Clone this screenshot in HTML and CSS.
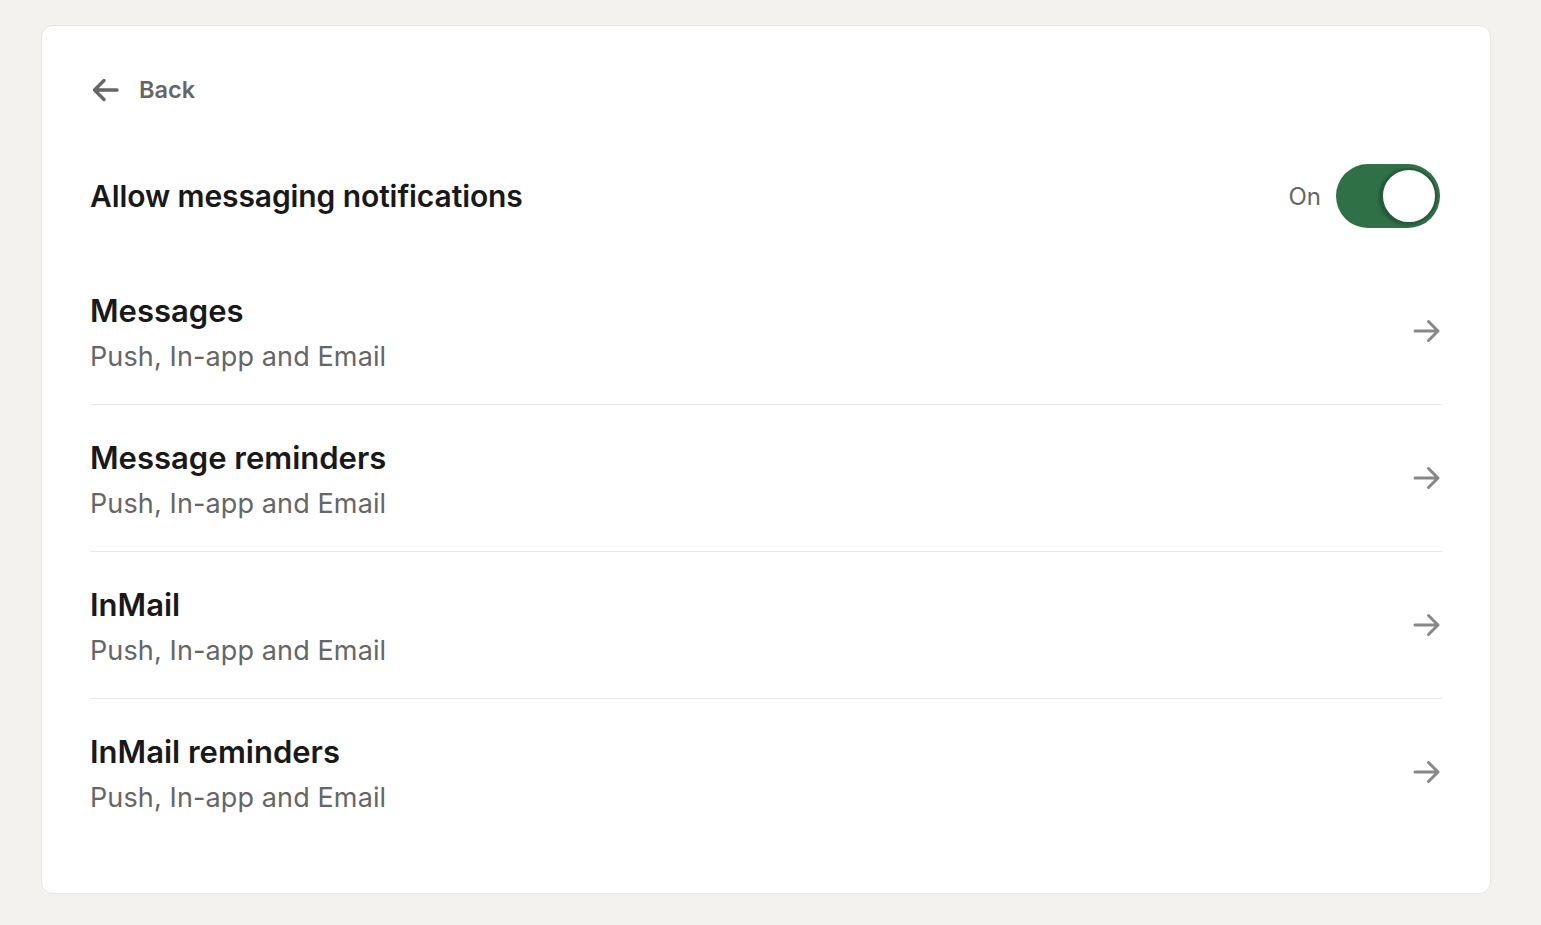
FILE: index.html
```html
<!DOCTYPE html>
<html lang="en">
<head>
<meta charset="utf-8">
<title>Messaging notifications</title>
<link rel="stylesheet" href="styles.css">
</head>
<body>
<main class="page">
  <section class="card">
    <a class="back" href="#">
      <svg class="back-icon" viewBox="0 0 28 28" width="28" height="28" aria-hidden="true">
        <path d="M26 14H4M13 4.5L3.5 14l9.5 9.5" fill="none" stroke="currentColor" stroke-width="3.4" stroke-linecap="round" stroke-linejoin="round"/>
      </svg>
      <span>Back</span>
    </a>

    <div class="master">
      <h1 class="master-title">Allow messaging notifications</h1>
      <div class="master-control">
        <span class="state">On</span>
        <span class="toggle"><span class="knob"></span></span>
      </div>
    </div>

    <ul class="list">
      <li class="item">
        <div class="item-text">
          <div class="item-title">Messages</div>
          <div class="item-sub">Push, In-app and Email</div>
        </div>
        <svg class="go" viewBox="0 0 28 28" width="28" height="28" aria-hidden="true"><path d="M2 14h23M15.5 4.5L25 14l-9.5 9.5" fill="none" stroke="currentColor" stroke-width="3" stroke-linecap="round" stroke-linejoin="round"/></svg>
      </li>
      <li class="item">
        <div class="item-text">
          <div class="item-title">Message reminders</div>
          <div class="item-sub">Push, In-app and Email</div>
        </div>
        <svg class="go" viewBox="0 0 28 28" width="28" height="28" aria-hidden="true"><path d="M2 14h23M15.5 4.5L25 14l-9.5 9.5" fill="none" stroke="currentColor" stroke-width="3" stroke-linecap="round" stroke-linejoin="round"/></svg>
      </li>
      <li class="item">
        <div class="item-text">
          <div class="item-title">InMail</div>
          <div class="item-sub">Push, In-app and Email</div>
        </div>
        <svg class="go" viewBox="0 0 28 28" width="28" height="28" aria-hidden="true"><path d="M2 14h23M15.5 4.5L25 14l-9.5 9.5" fill="none" stroke="currentColor" stroke-width="3" stroke-linecap="round" stroke-linejoin="round"/></svg>
      </li>
      <li class="item">
        <div class="item-text">
          <div class="item-title">InMail reminders</div>
          <div class="item-sub">Push, In-app and Email</div>
        </div>
        <svg class="go" viewBox="0 0 28 28" width="28" height="28" aria-hidden="true"><path d="M2 14h23M15.5 4.5L25 14l-9.5 9.5" fill="none" stroke="currentColor" stroke-width="3" stroke-linecap="round" stroke-linejoin="round"/></svg>
      </li>
    </ul>
  </section>
</main>
</body>
</html>
```

FILE: styles.css
```css
* { box-sizing: border-box; }

html, body {
  margin: 0;
  padding: 0;
  background: #f3f2ef;
}

body {
  font-family: Inter, "Noto Sans", "Liberation Sans", sans-serif;
  color: #191919;
  -webkit-font-smoothing: antialiased;
}

.page {
  padding: 25px 50px 30px 41px;
}

.card {
  width: 1450px;
  background: #ffffff;
  border: 1px solid #e6e6e3;
  border-radius: 12px;
  padding: 48px;
}

.back {
  display: flex;
  align-items: center;
  gap: 20px;
  height: 32px;
  color: #666666;
  text-decoration: none;
  font-size: 23.5px;
  font-weight: 600;
  line-height: 32px;
}

.back-icon {
  display: block;
  margin-left: 1px;
}

.master {
  display: flex;
  align-items: center;
  justify-content: space-between;
  margin-top: 58px;
  height: 64px;
}

.master-title {
  margin: 0;
  font-size: 30px;
  font-weight: 600;
  letter-spacing: -0.1px;
  line-height: 38px;
  color: #191919;
}

.master-control {
  display: flex;
  align-items: center;
  gap: 15px;
  margin-right: 2px;
}

.state {
  font-size: 24px;
  color: #666666;
}

.toggle {
  position: relative;
  display: block;
  width: 104px;
  height: 64px;
  border-radius: 32px;
  background: #2f7046;
}

.knob {
  position: absolute;
  top: 4px;
  right: 3px;
  width: 56px;
  height: 56px;
  border-radius: 50%;
  background: #ffffff;
  border: 2px solid #265c39;
  box-shadow: -2px 1px 3px rgba(0, 0, 0, 0.25);
}

.list {
  list-style: none;
  margin: 30px 0 0 0;
  padding: 0;
}

.item {
  display: flex;
  align-items: center;
  justify-content: space-between;
  height: 147px;
  border-bottom: 1px solid #e8e8e8;
}

.item:last-child {
  border-bottom: none;
  height: 146px;
}

.item-text {
  display: flex;
  flex-direction: column;
  padding-top: 6px;
}

.item-title {
  font-size: 31px;
  font-weight: 600;
  line-height: 34px;
  letter-spacing: 0;
  color: #191919;
}

.item-sub {
  font-size: 27px;
  line-height: 34px;
  margin-top: 12px;
  letter-spacing: 0.12px;
  color: #666666;
}

.go {
  display: block;
  color: #888888;
  margin-right: 1px;
}
```
